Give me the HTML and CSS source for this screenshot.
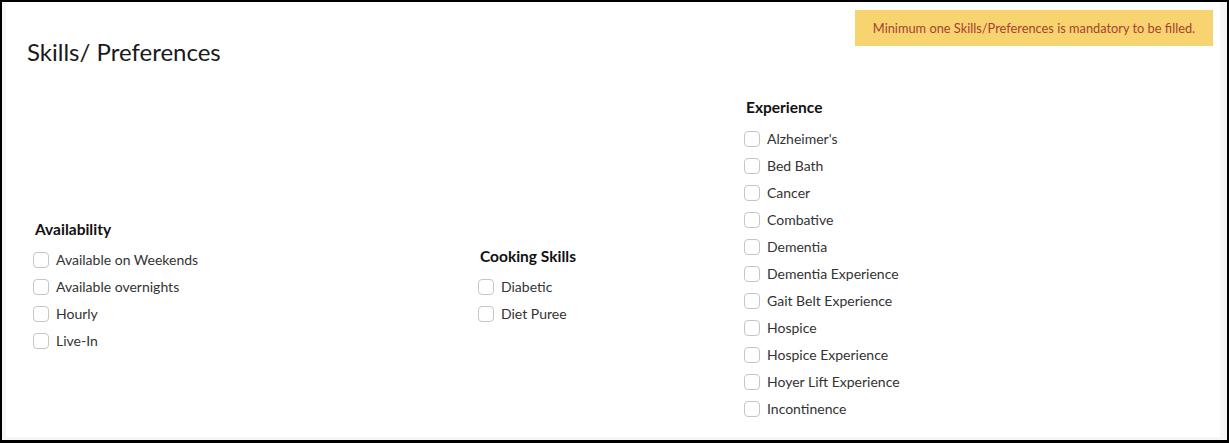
FILE: index.html
```html
<!DOCTYPE html>
<html lang="en">
<head>
  <meta charset="UTF-8">
  <meta name="viewport" content="width=device-width, initial-scale=1.0">
  <title>Skills/ Preferences</title>
  <link rel="stylesheet" href="styles.css">
</head>
<body>
  <div class="frame">
    <div class="card">
      <div class="card-head">
        <h2 class="title">Skills/ Preferences</h2>
        <div class="alert">Minimum one Skills/Preferences is mandatory to be filled.</div>
      </div>

      <div class="cols">
        <div class="group group-availability">
          <h4>Availability</h4>
          <label class="item"><input type="checkbox"> Available on Weekends</label>
          <label class="item"><input type="checkbox"> Available overnights</label>
          <label class="item"><input type="checkbox"> Hourly</label>
          <label class="item"><input type="checkbox"> Live-In</label>
        </div>

        <div class="group group-cooking">
          <h4>Cooking Skills</h4>
          <label class="item"><input type="checkbox"> Diabetic</label>
          <label class="item"><input type="checkbox"> Diet Puree</label>
        </div>

        <div class="group group-experience">
          <h4>Experience</h4>
          <label class="item"><input type="checkbox"> Alzheimer's</label>
          <label class="item"><input type="checkbox"> Bed Bath</label>
          <label class="item"><input type="checkbox"> Cancer</label>
          <label class="item"><input type="checkbox"> Combative</label>
          <label class="item"><input type="checkbox"> Dementia</label>
          <label class="item"><input type="checkbox"> Dementia Experience</label>
          <label class="item"><input type="checkbox"> Gait Belt Experience</label>
          <label class="item"><input type="checkbox"> Hospice</label>
          <label class="item"><input type="checkbox"> Hospice Experience</label>
          <label class="item"><input type="checkbox"> Hoyer Lift Experience</label>
          <label class="item"><input type="checkbox"> Incontinence</label>
        </div>
      </div>
    </div>
  </div>
</body>
</html>
```

FILE: styles.css
```css
* {
  margin: 0;
  padding: 0;
  box-sizing: border-box;
}

html, body {
  height: 100%;
}

body {
  font-family: 'Lato', 'Liberation Sans', sans-serif;
  color: #333;
  background: #000;
  overflow: hidden;
}

.frame {
  height: 100%;
  border: 2px solid #000;
  border-bottom-width: 3px;
  background: #f6f6f6;
  padding: 0 7px 3px 4px;
}

.card {
  height: 100%;
  background: #fff;
}

.card-head {
  display: flex;
  justify-content: space-between;
  align-items: flex-start;
  height: 80px;
}

.title {
  font-size: 24px;
  font-weight: 400;
  line-height: 30px;
  color: #1a1a1a;
  margin: 35px 0 0 21px;
}

.alert {
  margin: 8px 7px 0 0;
  width: 358px;
  height: 36px;
  line-height: 36px;
  text-align: center;
  font-size: 12.8px;
  color: #a8412f;
  background: #f7d46f;
}

.cols {
  display: grid;
  grid-template-columns: 445px 266px 1fr;
  align-items: start;
  padding-left: 27px;
}

.group h4 {
  font-size: 15.5px;
  font-weight: 700;
  line-height: 20px;
  color: #111;
  padding-left: 2px;
  margin-bottom: 7px;
}

.group-availability {
  margin-top: 137px;
}

.group-cooking {
  margin-top: 164px;
}

.group-experience {
  margin-top: 15px;
}

.group-experience h4 {
  margin-bottom: 8px;
}

.item {
  display: flex;
  align-items: center;
  gap: 7px;
  height: 27px;
  font-size: 14px;
  color: #333;
  cursor: pointer;
}

.item input {
  appearance: none;
  -webkit-appearance: none;
  width: 16px;
  height: 16px;
  border: 1px solid #c6c6c6;
  border-radius: 4px;
  background: #fff;
  flex-shrink: 0;
}
```
